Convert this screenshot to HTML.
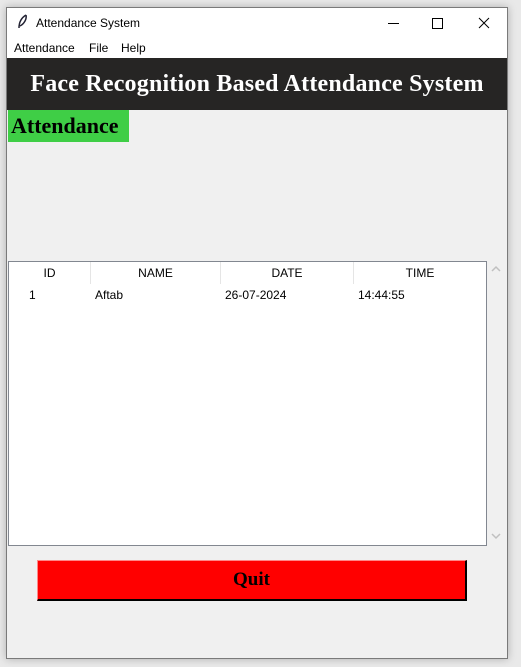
<!DOCTYPE html>
<html><head><style>
body{margin:0;width:521px;height:667px;background:#e9e9e9;position:relative;overflow:hidden;font-family:"Liberation Sans",sans-serif;}
.win{position:absolute;left:6px;top:7px;width:500px;height:650px;border:1px solid #7a7a7a;background:#f0f0f0;box-shadow:0 0 8px rgba(0,0,0,.25);}
.tb{position:absolute;left:0;top:0;width:500px;height:28px;background:#fff;font-size:12px;}
.menu{position:absolute;left:0;top:28px;width:500px;height:22px;background:#fff;font-size:12px;}
.menu span{position:absolute;top:5px;}
.head{position:absolute;left:0;top:50px;width:500px;height:52px;background:#262524;color:#fff;font:bold 24px "Liberation Serif",serif;text-align:center;line-height:52px;letter-spacing:0.2px;}
.lab{position:absolute;left:1px;top:102px;width:121px;height:32px;background:#3fce46;font:bold 22px "Liberation Serif",serif;line-height:32px;text-indent:3px;}
.tbl{position:absolute;left:1px;top:253px;width:477px;height:283px;background:#fff;border:1px solid #828790;font-size:12px;}
.th{position:absolute;top:0;height:22px;line-height:22px;text-align:center;border-right:1px solid #e5e5e5;}
.td{position:absolute;top:22px;height:22px;line-height:22px;}
.quit{position:absolute;left:30px;top:552px;width:427px;height:38px;background:#f00;border-top:1px solid #f88;border-left:1px solid #f88;border-right:2px solid #000;border-bottom:2px solid #000;font:bold 19px "Liberation Serif",serif;text-align:center;line-height:38px;}
</style></head><body>
<div class="win">
<div class="tb">
<svg style="position:absolute;left:10px;top:6px" width="12" height="16"><path d="M9 1 C4 4 2 9 2 14 M9 1 C10 5 7 10 3 12" stroke="#223" stroke-width="1.5" fill="none"/></svg>
<span style="position:absolute;left:29px;top:8px">Attendance System</span>
<div style="position:absolute;left:381px;top:15px;width:11px;height:1px;background:#000"></div>
<div style="position:absolute;left:425px;top:10px;width:9px;height:9px;border:1px solid #000"></div>
<svg style="position:absolute;left:471px;top:9px" width="12" height="12"><path d="M1 1L11 11M11 1L1 11" stroke="#000"/></svg>
</div>
<div class="menu"><span style="left:7px">Attendance</span><span style="left:82px">File</span><span style="left:114px">Help</span></div>
<div class="head">Face Recognition Based Attendance System</div>
<div class="lab">Attendance</div>
<div class="tbl">
<div class="th" style="left:0;width:81px">ID</div>
<div class="th" style="left:82px;width:129px">NAME</div>
<div class="th" style="left:212px;width:132px">DATE</div>
<div class="th" style="left:345px;width:132px;border:none">TIME</div>
<div class="td" style="left:20px">1</div>
<div class="td" style="left:86px">Aftab</div>
<div class="td" style="left:216px">26-07-2024</div>
<div class="td" style="left:349px">14:44:55</div>
</div>
<svg style="position:absolute;left:484px;top:257px" width="10" height="8"><path d="M1 6L5 2L9 6" stroke="#c0c0c0" stroke-width="1.5" fill="none"/></svg>
<svg style="position:absolute;left:484px;top:524px" width="10" height="8"><path d="M1 2L5 6L9 2" stroke="#c0c0c0" stroke-width="1.5" fill="none"/></svg>
<div class="quit">Quit</div>
</div>
</body></html>
